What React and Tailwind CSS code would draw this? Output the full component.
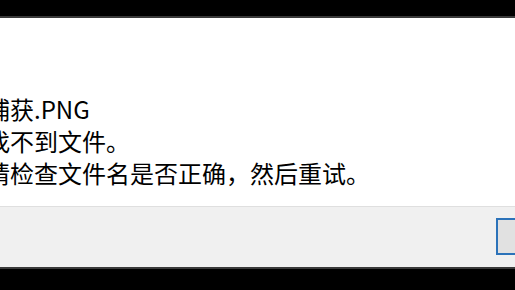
export default function App() {
  return (
    <div className="w-[515px] h-[290px] bg-black flex flex-col overflow-hidden" style={{ fontFamily: '"Noto Sans CJK SC", "Noto Sans", sans-serif' }}>
      {/* top edge */}
      <div className="h-[16px] shrink-0 bg-black" />
      <div className="h-[2px] shrink-0 bg-[#3a3a3a]" />

      {/* message area */}
      <div className="h-[188px] shrink-0 bg-white pt-[75px] -ml-[14px] w-[529px] text-[24px] leading-[32px] text-black">
        <div>捕获.PNG</div>
        <div>找不到文件。</div>
        <div>请检查文件名是否正确，然后重试。</div>
      </div>

      {/* button bar */}
      <div className="h-[61px] shrink-0 bg-[#f0f0f0] border-t border-[#dfdfdf] flex items-start">
        <div className="ml-[496px] mt-[11px] w-[40px] h-[37px] shrink-0 border-2 border-[#2b72b9] bg-[#e1e1e1]" />
      </div>
      <div className="h-[2px] shrink-0 bg-[#3a3a3a]" />
      <div className="flex-1 bg-black" />
    </div>
  );
}
